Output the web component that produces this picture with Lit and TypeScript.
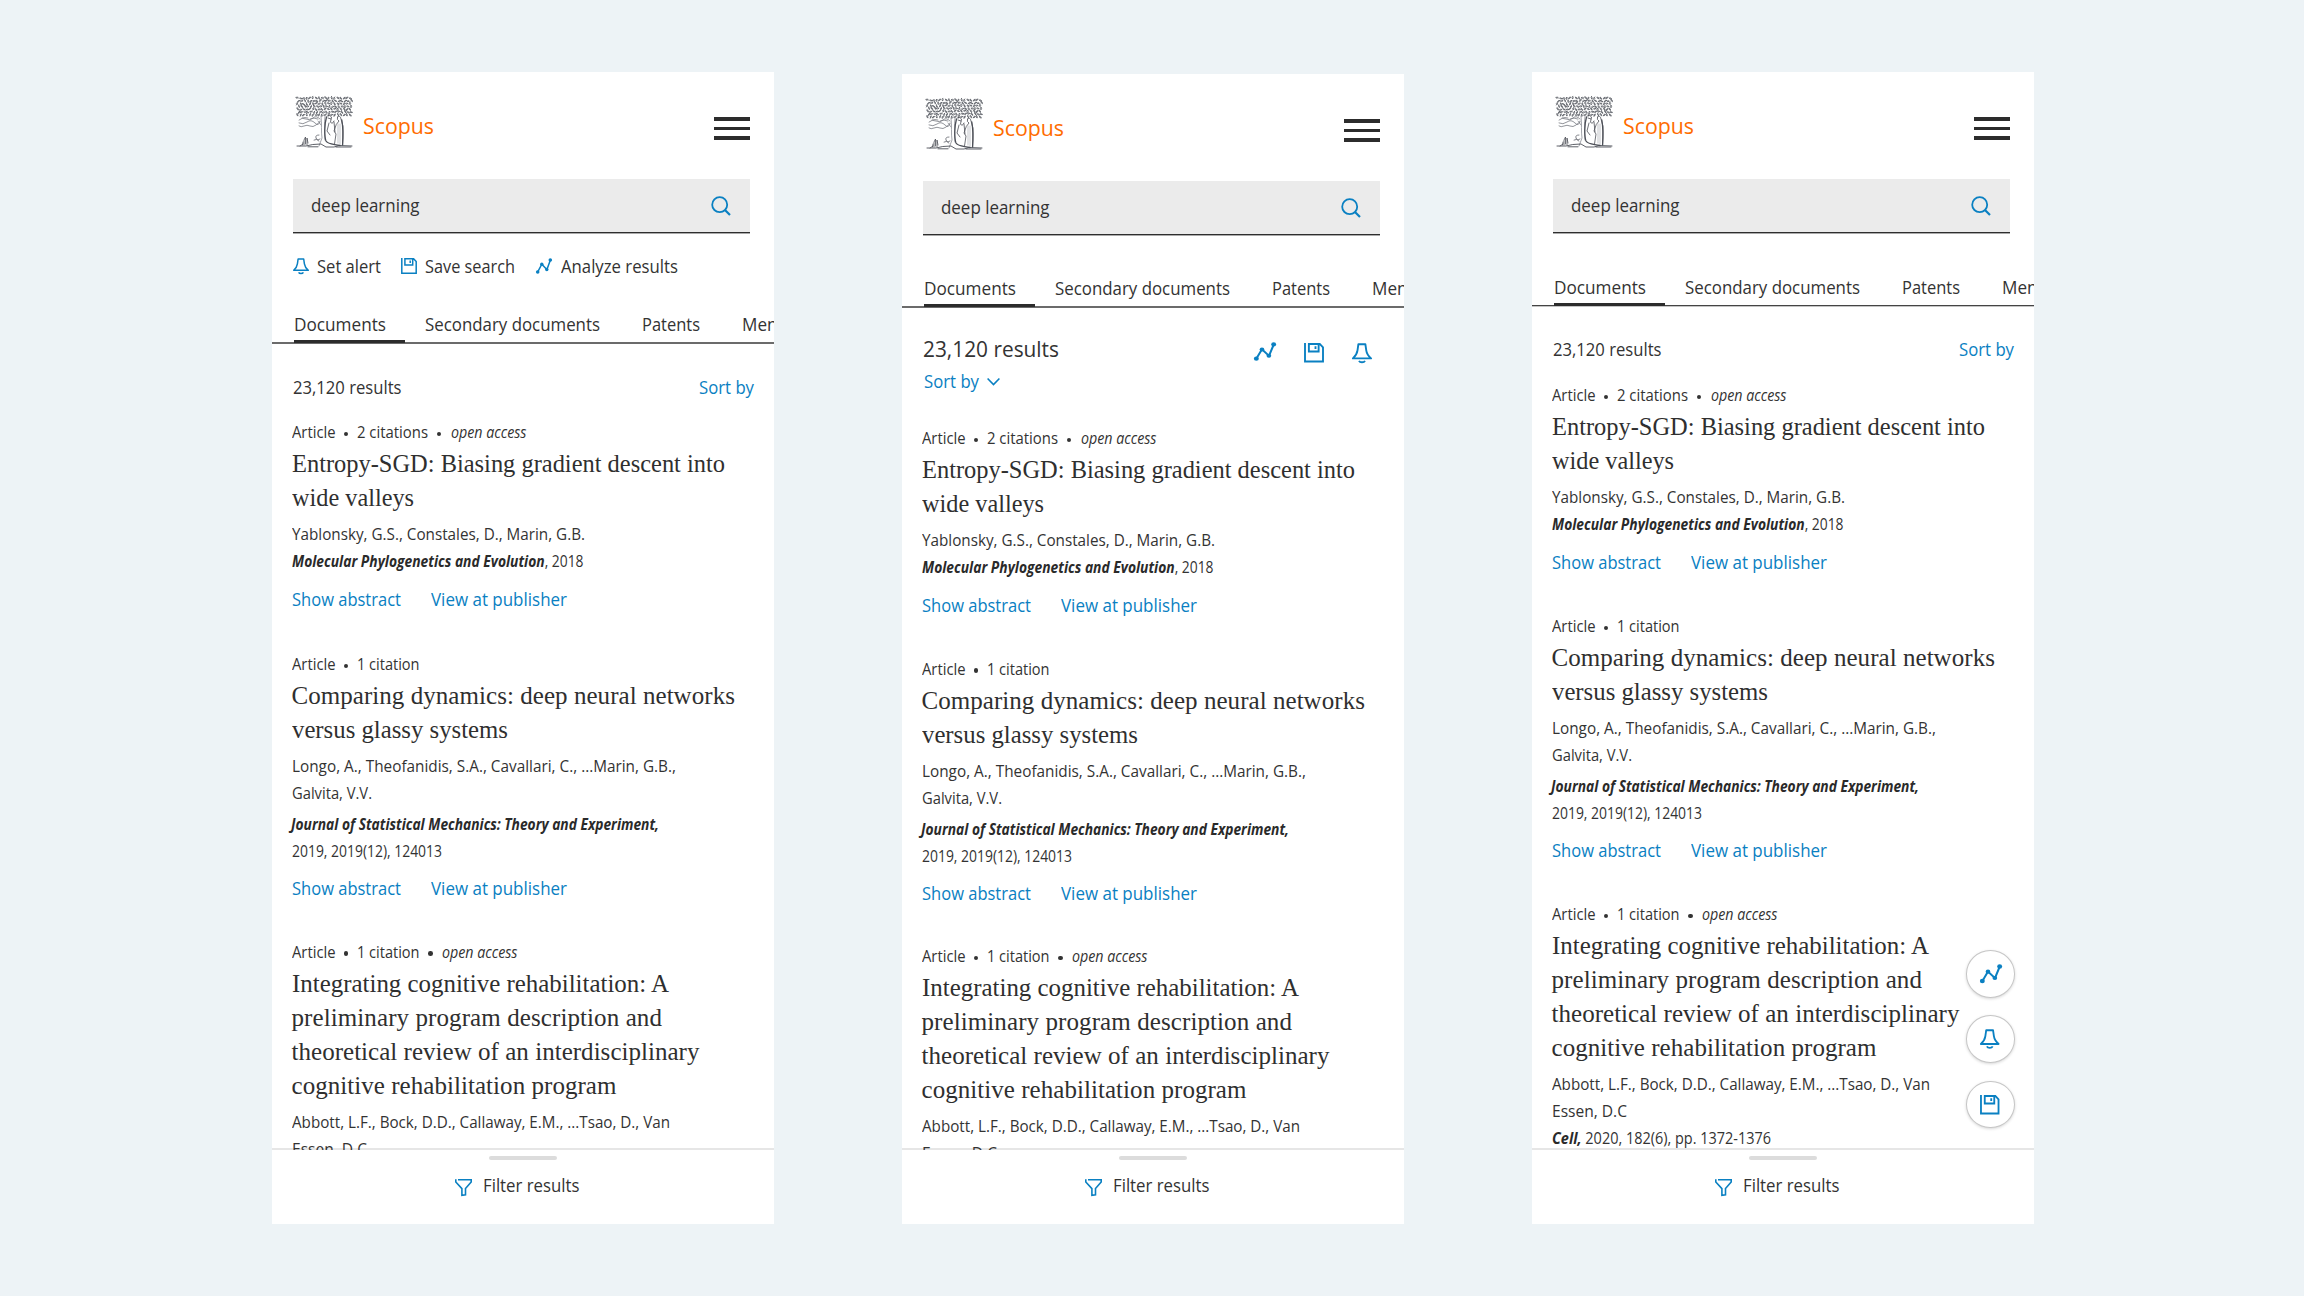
import { LitElement, html, css, svg, nothing } from "lit";
import { customElement, property } from "lit/decorators.js";

/** One line of text set to a measure of `w` pixels: wide text is condensed, narrow text is tracked out. */
@customElement("fit-line")
class FitLine extends LitElement {
  static styles = css`
    :host { display: inline-block; white-space: nowrap; }
    .run { display: inline-block; transform-origin: 0 50%; vertical-align: top; }
  `;
  @property({ type: Number }) w = 0;
  firstUpdated() {
    const run = this.renderRoot.querySelector(".run") as HTMLElement;
    const natural = run.getBoundingClientRect().width;
    const count = (this.textContent ?? "").trim().length;
    if (!this.w || !count || !natural) return;
    if (natural > this.w) {
      run.style.transform = `scaleX(${(this.w / natural).toFixed(4)})`;
      this.style.width = `${this.w}px`;
    } else {
      run.style.letterSpacing = `${((this.w - natural) / count).toFixed(3)}px`;
    }
  }
  render() {
    return html`<span class="run"><slot></slot></span>`;
  }
}

const bell = svg`<path d="M5.1 1H10.7L11.4 5.900C11.8 8.700 13.2 10.600 15.3 12.300H.7C2.7 10.600 4 8.700 4.4 5.900Z" stroke-linejoin="round"/><path d="M5.6 14.300C6.4 15.800 9.600 15.800 10.400 14.300"/>`;
const disk = svg`<path d="M.8 0V15.2H15.2V3.6L12.6.8H3.9V7H11.7V.8M9.2 2.6V5"/>`;
const chart = svg`<path d="M1.6 14.2 5.8 6.2 10.9 11.6 14.4 2"/><g fill="currentColor" stroke="none"><circle cx="1.7" cy="14" r="1.800"/><circle cx="5.8" cy="6.3" r="1.700"/><circle cx="10.8" cy="11.5" r="1.700"/><circle cx="14.3" cy="2" r="1.800"/></g>`;
const icons: Record<string, unknown> = { bell, disk, chart };

@customElement("line-icon")
class LineIcon extends LitElement {
  static styles = css`
    :host { display: block; color: #0a80c2; }
    svg { display: block; width: 100%; height: 100%; overflow: visible; }
  `;
  @property() name = "bell";
  render() {
    return html`<svg viewBox="0 0 16 16" preserveAspectRatio="none" fill="none" stroke="currentColor" stroke-width="1.5">${icons[this.name]}</svg>`;
  }
}

/** Engraved elm tree with two figures under it. */
@customElement("tree-logo")
class TreeLogo extends LitElement {
  static styles = css`
    :host { display: block; width: 57px; height: 52px; }
    svg { display: block; overflow: visible; }
  `;
  private leaves() {
    let seed = 90127;
    const rnd = () => {
      seed = (Math.imul(seed, 1664525) + 1013904223) >>> 0;
      return (seed >>> 8) / 16777216;
    };
    let d = "";
    for (let row = 0; row < 7; row++) {
      for (let col = 0; col < 18; col++) {
        if (row === 6 && rnd() < 0.12) continue;
        const x = 1.4 + col * 3.1 + (row % 2) * 1.2 + rnd() * 0.9 - 0.4;
        const y = 1.6 + row * 2.8 + rnd() * 0.9;
        const a = rnd() * 6.28;
        const c = Math.cos(a) * 1.4;
        const s = Math.sin(a) * 1.4;
        d += `M${(x - c).toFixed(1)} ${(y - s).toFixed(1)}q${(c - s).toFixed(1)} ${(s + c).toFixed(1)} ${(2 * c).toFixed(1)} ${(2 * s).toFixed(1)}q${(-c + s).toFixed(1)} ${(-s - c).toFixed(1)} ${(-1.6 * c).toFixed(1)} ${(-1.6 * s).toFixed(1)}`;
      }
    }
    return d;
  }
  render() {
    return html`<svg width="57" height="52" viewBox="0 0 57 52" fill="none" stroke="#4c4f57" stroke-linecap="round">
      <path d=${this.leaves()} stroke-width=".85" stroke="#5b5e66"/>
      <path d="M3 24q3-3 7-1t7-1 7 1M3 27q4 2 8-1t8 1 5-2M3 30q2 1.500 5 0t6 0 6-1 4-3M6 22q3-1 6 0M14 23q4-2 8 0" stroke-width=".8" stroke="#777a82"/>
      <path d="M25 20C26 28 25 36 26 42L23 50M29 20C28 27 29 38 29 44M22 25L25 29" stroke-width=".8" stroke="#8a8d94"/>
      <path d="M30.500 21C28.500 28 28 40 30 45C32 48.500 38 48 44 49.500" stroke-width="1.300"/>
      <path d="M31 20Q34 18 35.500 21L34.500 26Q36 29 38 25M32 22L35 23M33 27L31 35L34 39M38 26L39 36" stroke-width=".8"/>
      <path d="M41.500 21Q44 18.500 45 23Q48 30 47 38L46.500 48.500M41.500 21Q40.500 24 43 25Q40 27 38 35L40 38 38.500 48" stroke-width=".8"/>
      <path d="M45.800 24Q47.600 34 46.600 49" stroke-width="1.300"/>
      <path d="M42 28V47M44 28V48" stroke-width=".5" stroke="#8a8d94"/>
      <path d="M23 39q-4 0-3 3t4 1M18 44q3-2 5 1" stroke-width=".7"/>
      <path d="M1 50H10Q16 48 25 48L30 51H38L43 49.500L56 50M40 51H55M12 50.800H22" stroke-width=".9"/>
      <path d="M8 49V44L9.500 41V48M11 49V42L12 47M6.500 49L7 46M4 50l3-2" stroke-width=".8"/>
    </svg>`;
  }
}

type Line = { text: string; w: number };
interface Article {
  citations: Line;
  open: boolean;
  title: Line[];
  authors: Line[];
  journal: { name: string; rest?: string; w: number }[];
  gap: string;
}

const articles: Article[] = [
  {
    citations: { text: "2 citations", w: 71 },
    open: true,
    title: [
      { text: "Entropy-SGD: Biasing gradient descent into", w: 433 },
      { text: "wide valleys", w: 122 },
    ],
    authors: [{ text: "Yablonsky, G.S., Constales, D., Marin, G.B.", w: 293 }],
    journal: [{ name: "Molecular Phylogenetics and Evolution", rest: ", 2018", w: 291.5 }],
    gap: "one",
  },
  {
    citations: { text: "1 citation", w: 62.5 },
    open: false,
    title: [
      { text: "Comparing dynamics: deep neural networks", w: 443.5 },
      { text: "versus glassy systems", w: 216 },
    ],
    authors: [
      { text: "Longo, A., Theofanidis, S.A., Cavallari, C., ...Marin, G.B.,", w: 384 },
      { text: "Galvita, V.V.", w: 80 },
    ],
    journal: [
      { name: "Journal of Statistical Mechanics: Theory and Experiment,", w: 368 },
      { name: "", rest: "2019, 2019(12), 124013", w: 150 },
    ],
    gap: "two",
  },
  {
    citations: { text: "1 citation", w: 62.5 },
    open: true,
    title: [
      { text: "Integrating cognitive rehabilitation: A", w: 377 },
      { text: "preliminary program description and", w: 370.5 },
      { text: "theoretical review of an interdisciplinary", w: 408 },
      { text: "cognitive rehabilitation program", w: 325 },
    ],
    authors: [
      { text: "Abbott, L.F., Bock, D.D., Callaway, E.M., ...Tsao, D., Van", w: 378 },
      { text: "Essen, D.C", w: 75 },
    ],
    journal: [{ name: "Cell,", rest: " 2020, 182(6), pp. 1372-1376", w: 219 }],
    gap: "three",
  },
];

@customElement("result-item")
class ResultItem extends LitElement {
  static styles = css`
    :host { display: block; color: #333; }
    .meta, .small { font-size: 16px; line-height: 27px; height: 27px; }
    .meta { display: flex; align-items: center; }
    .dot { width: 4.600px; height: 4.600px; border-radius: 50%; background: #333; margin: 3px 9.300px 0 8.500px; }
    .oa, .name { font-style: italic; }
    .name { font-weight: 700; color: #2a2a2a; }
    .title { font-family: "Liberation Serif", serif; font-size: 25px; line-height: 34px; margin: 1px 0 6px; color: #2f2f2f; }
    .title fit-line, .small fit-line { display: block; width: max-content; }
    .title fit-line { height: 34px; }
    .small fit-line { height: 27px; }
    .links { display: flex; gap: 30px; font-size: 18px; line-height: 28px; height: 28px; color: #0a80c2; margin-top: 10px; }
    .two .journal { margin-top: 4px; }
    .two .links { margin-top: 9px; }
    .two .journal .small:first-child { margin-left: -1px; }
  `;
  @property({ attribute: false }) item!: Article;
  /** How far the item is unrolled above the footer: everything, up to the journal, or up to the authors. */
  @property() extent: "full" | "journal" | "authors" = "full";
  render() {
    const a = this.item;
    return html`<div class=${a.gap}>
      <div class="meta"><fit-line w="43.5">Article</fit-line><i class="dot"></i><fit-line w=${a.citations.w}>${a.citations.text}</fit-line>${a.open ? html`<i class="dot"></i><fit-line class="oa" w="75.5">open access</fit-line>` : nothing}</div>
      <div class="title">${a.title.map((l) => html`<fit-line w=${l.w}>${l.text}</fit-line>`)}</div>
      ${a.authors.map((l) => html`<div class="small"><fit-line w=${l.w}>${l.text}</fit-line></div>`)}
      ${this.extent !== "authors"
        ? html`<div class="journal">${a.journal.map((j) => html`<div class="small"><fit-line w=${j.w}>${j.name ? html`<span class="name">${j.name}</span>` : nothing}${j.rest ?? ""}</fit-line></div>`)}</div>`
        : nothing}
      ${this.extent === "full"
        ? html`<div class="links"><fit-line w="109">Show abstract</fit-line><fit-line w="136">View at publisher</fit-line></div>`
        : nothing}
    </div>`;
  }
}

@customElement("scopus-screen")
class ScopusScreen extends LitElement {
  static styles = css`
    :host { display: flex; flex-direction: column; position: relative; width: 502px; background: #fff; overflow: hidden; color: #333; font-size: 18px; line-height: 28px; }
    .body { display: flex; flex-direction: column; flex: 1; min-height: 0; }
    .header { display: flex; align-items: flex-start; height: 107px; padding: 24px 24px 0 23.500px; box-sizing: border-box; flex: none; }
    .brand { font-size: 22px; line-height: 30px; color: #ff6c00; margin: 14px 0 0 10.500px; }
    .menu { margin-left: auto; margin-top: 21px; width: 36px; height: 23px; display: flex; flex-direction: column; justify-content: space-between; }
    .menu i { height: 3.700px; background: #2c2c2c; }
    .search { flex: none; margin: 0 24px 0 21px; height: 55px; box-sizing: border-box; background: linear-gradient(#2e2e2e, #2e2e2e) 0 53px / 100% 1px no-repeat, linear-gradient(#aaa, #aaa) 0 54px / 100% 1px no-repeat, #ebebeb; padding: 0 19.500px 2px 17.500px; display: flex; align-items: center; justify-content: space-between; }
    .search fit-line { margin-bottom: 1px; }
    .search svg { display: block; overflow: visible; }
    .actions { display: flex; align-items: center; height: 28px; margin: 18px 0 0 21px; flex: none; }
    .actions line-icon { width: 16px; height: 16px; margin-right: 8px; }
    .actions fit-line { margin-right: 20px; }
    .actions .sp { margin-right: 21px; }
    .actions .last { margin-left: 1px; }
    .tabs { flex: none; display: flex; height: 34px; padding-left: 22px; overflow: hidden; background: linear-gradient(#6b6b6b, #6b6b6b) 0 32px / 100% 2px no-repeat; }
    .tab { flex: none; height: 34px; line-height: 28px; padding-left: 1px; margin-right: 41px; }
    .tab.on { width: 111px; padding-left: 0; margin-right: 19px; box-sizing: border-box; background: linear-gradient(#2c2c2c, #2c2c2c) 0 30px / 100% 3px no-repeat; }
    .summary { flex: none; display: flex; justify-content: space-between; padding: 0 20px 0 20.500px; }
    .link { color: #0a80c2; }
    .list { flex: 1; min-height: 0; overflow: hidden; padding-left: 19.500px; display: flex; flex-direction: column; gap: 37px; }
    .list > * { flex: none; }
    .footer { flex: none; height: 76px; box-sizing: border-box; border-top: 2px solid #e6e6e6; margin-top: -2px; display: flex; flex-direction: column; align-items: center; }
    .handle { width: 68px; height: 4px; border-radius: 2px; background: #dcdcdc; margin-top: 6px; }
    .filter { display: flex; align-items: center; gap: 11px; margin: 11px 0 0 -12px; }
    .filter svg { display: block; margin-top: 5px; overflow: visible; }
    .big { font-size: 22px; line-height: 30px; display: block; width: max-content; }
    .sort { display: flex; align-items: center; margin: 4px 0 0 1px; gap: 8px; }
    .tools { display: flex; margin: 9px 12px 0 0; height: 20px; align-items: flex-start; }
    .tools .c { width: 22px; height: 19px; }
    .tools .d { width: 20px; height: 19.500px; margin: 1px 0 0 28.500px; }
    .tools .b { width: 20px; height: 20px; margin: 1px 0 0 28px; }
    .fabs { position: absolute; right: 19px; top: 878px; display: flex; flex-direction: column; gap: 17.700px; }
    .fab { width: 49px; height: 47.700px; box-sizing: border-box; border-radius: 50%; border: 1.500px solid #c6c6c6; background: #fff; box-shadow: 0 1px 3px rgba(0,0,0,.16); display: flex; align-items: center; justify-content: center; }
    .fab line-icon { width: 19.500px; height: 19.500px; margin-right: 1px; }
    .fab .c { width: 22px; margin: 0 0 0 1px; }

    .a .tabs { margin-top: 30px; }
    .a .summary { margin-top: 29px; }
    .a .list { margin-top: 18px; gap: 36.500px; }
    .a .list > :first-child { margin-bottom: 1.500px; }
    .b .tabs { margin-top: 38px; }
    .b .summary { margin-top: 25px; }
    .b .list { margin-top: 30px; gap: 36.500px; }
    .c3 .tabs { margin-top: 39px; background: linear-gradient(#444, #444) 0 32px / 100% 1px no-repeat, linear-gradient(#c4c4c4, #c4c4c4) 0 33px / 100% 1px no-repeat; }
    .c3 .summary { margin-top: 28px; }
    .c3 .list { margin-top: 19px; }
  `;
  @property() variant = "a";
  render() {
    const v = this.variant;
    const tail = v === "c3" ? "journal" : "authors";
    return html`<div class="body ${v}">
      <div class="header">
        <tree-logo></tree-logo><fit-line class="brand" w="71">Scopus</fit-line>
        <div class="menu"><i></i><i></i><i></i></div>
      </div>
      <div class="search"><fit-line w="108.5">deep learning</fit-line>
        <svg width="20" height="20" viewBox="0 0 20 20" fill="none" stroke="#0a80c2" stroke-width="1.8"><circle cx="8.7" cy="8.7" r="7.500"/><path d="M14 14L19 19" stroke-width="2.200"/></svg>
      </div>
      ${v === "a"
        ? html`<div class="actions">
            <line-icon name="bell"></line-icon><fit-line w="64">Set alert</fit-line>
            <line-icon name="disk"></line-icon><fit-line class="sp" w="90">Save search</fit-line>
            <line-icon name="chart"></line-icon><fit-line class="last" w="117">Analyze results</fit-line>
          </div>`
        : nothing}
      <div class="tabs">
        <div class="tab on"><fit-line w="92">Documents</fit-line></div>
        <div class="tab"><fit-line w="175">Secondary documents</fit-line></div>
        <div class="tab"><fit-line w="58">Patents</fit-line></div>
        <div class="tab"><fit-line w="35.5">Men</fit-line></div>
      </div>
      ${v === "b"
        ? html`<div class="summary">
            <div><fit-line class="big" w="136">23,120 results</fit-line>
              <div class="sort link"><fit-line w="55">Sort by</fit-line><svg width="13" height="9" viewBox="0 0 13 9" fill="none" stroke="currentColor" stroke-width="1.600"><path d="M.6 1.500L6.500 7.600L12.400 1.500"/></svg></div></div>
            <div class="tools"><line-icon class="c" name="chart"></line-icon><line-icon class="d" name="disk"></line-icon><line-icon class="b" name="bell"></line-icon></div>
          </div>`
        : html`<div class="summary"><fit-line w="108.5">23,120 results</fit-line><fit-line class="link" w="55">Sort by</fit-line></div>`}
      <div class="list">${articles.map((a, i) => html`<result-item .item=${a} extent=${i === 2 ? tail : "full"}></result-item>`)}</div>
      <div class="footer">
        <div class="handle"></div>
        <div class="filter">
          <svg width="17" height="17" viewBox="0 0 17 17" fill="none" stroke="#0a80c2" stroke-width="1.600"><path d="M3 .8H16.200V3L10.500 9.600V15.800L6.900 16.300V9.600L.8 3V.3" /></svg>
          <fit-line w="96.5">Filter results</fit-line>
        </div>
      </div>
      ${v === "c3"
        ? html`<div class="fabs">
            <div class="fab"><line-icon class="c" name="chart"></line-icon></div>
            <div class="fab"><line-icon name="bell"></line-icon></div>
            <div class="fab"><line-icon name="disk"></line-icon></div>
          </div>`
        : nothing}
    </div>`;
  }
}

@customElement("app-root")
class AppRoot extends LitElement {
  static styles = css`
    :host { display: flex; gap: 128px; width: 2304px; height: 1296px; box-sizing: border-box; padding: 72px 0 72px 272px; background: #edf3f6; overflow: hidden; font-family: "Open Sans", "Noto Sans", sans-serif; }
    .mid { margin-top: 2px; }
  `;
  render() {
    return html`<scopus-screen variant="a"></scopus-screen><scopus-screen class="mid" variant="b"></scopus-screen><scopus-screen variant="c3"></scopus-screen>`;
  }
}
